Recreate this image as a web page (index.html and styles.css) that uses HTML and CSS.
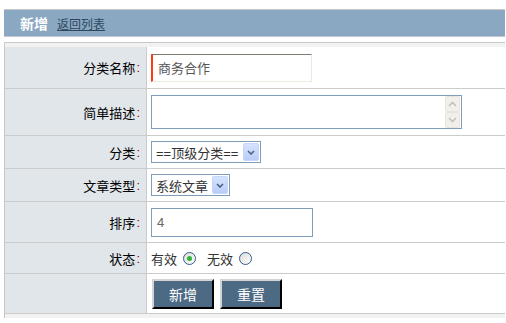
FILE: index.html
```html
<!DOCTYPE html>
<html lang="zh-CN">

<head>
    <meta charset="UTF-8">
    <title>新增</title>
    <link rel="stylesheet" href="styles.css">
</head>

<body>
    <!-- 标题栏 -->
    <div class="title">
        <b>新增</b>
        <a href="#">返回列表</a>
    </div>

    <!-- 表单 -->
    <div class="form-box">
        <div class="form">
            <div class="label">分类名称<i>:</i></div>
            <div class="field">
                <div class="ipt ipt-focus">商务合作</div>
            </div>

            <div class="label">简单描述<i>:</i></div>
            <div class="field">
                <div class="textarea">
                    <div class="textarea-body"></div>
                    <div class="scroll">
                        <span class="scroll-btn">
                            <svg width="9" height="6" viewBox="0 0 9 6"><path d="M1 5 L4.5 1.5 L8 5" fill="none" stroke="#c3c3b8" stroke-width="1.6"/></svg>
                        </span>
                        <span class="scroll-btn">
                            <svg width="9" height="6" viewBox="0 0 9 6"><path d="M1 1 L4.5 4.5 L8 1" fill="none" stroke="#c3c3b8" stroke-width="1.6"/></svg>
                        </span>
                    </div>
                </div>
            </div>

            <div class="label">分类<i>:</i></div>
            <div class="field">
                <div class="select select-cate">
                    <span class="select-text">==顶级分类==</span>
                    <span class="select-btn">
                        <svg width="8" height="5" viewBox="0 0 8 5"><path d="M1 1 L4 4 L7 1" fill="none" stroke="#4d6185" stroke-width="1.6"/></svg>
                    </span>
                </div>
            </div>

            <div class="label">文章类型<i>:</i></div>
            <div class="field">
                <div class="select select-type">
                    <span class="select-text">系统文章</span>
                    <span class="select-btn">
                        <svg width="8" height="5" viewBox="0 0 8 5"><path d="M1 1 L4 4 L7 1" fill="none" stroke="#4d6185" stroke-width="1.6"/></svg>
                    </span>
                </div>
            </div>

            <div class="label">排序<i>:</i></div>
            <div class="field">
                <div class="ipt ipt-sort">4</div>
            </div>

            <div class="label">状态<i>:</i></div>
            <div class="field">
                有效 <span class="radio checked"></span>
                无效 <span class="radio"></span>
            </div>

            <div class="label"></div>
            <div class="field">
                <a href="javascript:;" class="btn">新增</a>
                <a href="javascript:;" class="btn">重置</a>
            </div>
        </div>
    </div>
</body>

</html>
```
FILE: styles.css
```css
* {
    margin: 0;
    padding: 0;
    box-sizing: border-box;
}

body {
    background: #fff;
    font-family: "Liberation Sans", "Noto Sans CJK SC", sans-serif;
    font-size: 13px;
    color: #000;
}

a {
    text-decoration: none;
}

i {
    font-style: normal;
}

/* 标题栏 */
.title {
    display: flex;
    align-items: center;
    height: 28px;
    margin: 9px 1px 0 4px;
    padding-left: 16px;
    background-color: #8aa8c1;
    border-top: 1px solid #c8c8c8;
    border-bottom: 1px solid #bfc8d0;
}

.title b {
    color: #fff;
    font-size: 14px;
    margin-right: 9px;
}

.title a {
    color: #2c475f;
    font-size: 12px;
    text-decoration: underline;
}

/* 表单 */
.form-box {
    margin: 5px 1px 0 4px;
    padding: 4px 0;
    background-color: #f2f2f2;
    border-top: 1px solid #c8c8c8;
    border-left: 1px solid #c8c8c8;
}

.form {
    display: grid;
    grid-template-columns: 142px 1fr;
    grid-template-rows: 42px 47px 33px 33px 41px 31px 40px;
    background-color: #fff;
}

.label,
.field {
    display: flex;
    align-items: center;
    border-bottom: 1px solid #cbcbcb;
}

.label {
    justify-content: flex-end;
    padding-right: 6px;
    background-color: #e1e6ea;
    border-right: 1px solid #cbcbcb;
}

.label i {
    color: #a00;
    margin-left: 1px;
}

.field {
    padding-left: 4px;
    color: #333;
}

.ipt {
    display: flex;
    align-items: center;
    padding-left: 5px;
    color: #666;
    background: #fff;
    border: 1px solid #7f9db9;
}

.ipt-focus {
    width: 161px;
    height: 28px;
    border-width: 1px 1px 1px 2px;
    border-color: #7f7b70 #ecebde #ecebde #ff3b14;
    color: #555;
}

.ipt-sort {
    width: 162px;
    height: 29px;
}

/* 多行文本 */
.textarea {
    display: flex;
    justify-content: space-between;
    width: 311px;
    height: 34px;
    border: 1px solid #7f9db9;
    background: #fff;
}

.scroll {
    display: flex;
    flex-direction: column;
    width: 17px;
    padding: 0 1px;
}

.scroll-btn {
    display: flex;
    align-items: center;
    justify-content: center;
    height: 16px;
    background-color: #f1f0ea;
    border: 1px solid #e6e5dc;
    border-radius: 2px;
}

/* 下拉框 */
.select {
    display: flex;
    align-items: center;
    justify-content: space-between;
    height: 22px;
    padding: 0 1px 0 4px;
    border: 1px solid #7f9db9;
    background: #fff;
    white-space: nowrap;
}

.select-cate {
    width: 110px;
}

.select-type {
    width: 79px;
}

.select-btn {
    display: flex;
    align-items: center;
    justify-content: center;
    width: 16px;
    height: 18px;
    background: linear-gradient(#d6e3fd, #b8cdf8);
    border: 1px solid #c5d6fa;
    border-radius: 2px;
}

/* 单选 */
.radio {
    display: inline-block;
    position: relative;
    width: 13px;
    height: 13px;
    margin: 0 11px 0 6px;
    border: 1px solid #2f5c8f;
    border-radius: 50%;
    background: linear-gradient(135deg, #dcdcd6, #fff);
}

.radio.checked::after {
    content: "";
    position: absolute;
    top: 3px;
    left: 3px;
    width: 5px;
    height: 5px;
    border-radius: 50%;
    background-color: #2fb43a;
}

/* 按钮 */
.btn {
    display: inline-flex;
    align-items: center;
    justify-content: center;
    width: 62px;
    height: 30px;
    margin: 0 6px 0 1px;
    color: #fff;
    font-size: 14px;
    background-color: #4c6a83;
    border: 2px solid;
    border-color: #d4d4d4 #000 #000 #d4d4d4;
}

.btn + .btn {
    margin-left: 0;
}
```
